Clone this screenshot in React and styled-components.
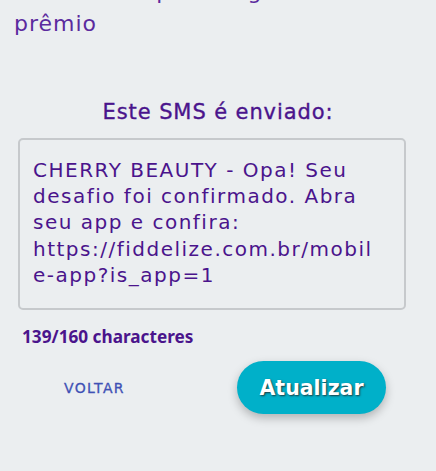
import React from "react";
import styled, { createGlobalStyle } from "styled-components";

const Global = createGlobalStyle`
  html, body { margin: 0; padding: 0; background: #ebeef0; }
  body { width: 436px; height: 471px; overflow: hidden; font-family: "DejaVu Sans", "Noto Sans", sans-serif; }
`;

const Page = styled.div`
  display: flex;
  flex-direction: column;
`;

const Intro = styled.p`
  margin: -24px 0 0 0;
  padding: 0 14px;
  font-family: "DejaVu Sans", sans-serif;
  font-size: 22px;
  letter-spacing: 1px;
  line-height: 32px;
  color: #5b2a9e;
  white-space: pre-line;
`;

const Title = styled.h2`
  margin: 58px 0 0 0;
  text-align: center;
  font-family: "DejaVu Sans", sans-serif;
  font-size: 21px;
  font-weight: 400;
  -webkit-text-stroke: 0.35px #4a148c;
  letter-spacing: 0.9px;
  line-height: 28px;
  color: #4a148c;
`;

const MessageBox = styled.div`
  margin: 12px 30px 0 18px;
  height: 172px;
  box-sizing: border-box;
  border: 2px solid #c6c9cc;
  border-radius: 5px;
  padding: 17px 10px 0 13px;
  font-family: "DejaVu Sans", sans-serif;
  font-size: 20px;
  letter-spacing: 1.5px;
  line-height: 26.2px;
  color: #4a148c;
  white-space: pre-line;
`;

const Counter = styled.div`
  margin: 16px 0 0 22px;
  font-family: "Noto Sans", sans-serif;
  font-size: 17.2px;
  font-weight: 700;
  line-height: 22px;
  color: #4a148c;
`;

const Footer = styled.div`
  display: flex;
  align-items: center;
  justify-content: space-between;
  margin-top: 13px;
  padding: 0 50px 0 64px;
`;

const TextButton = styled.button`
  background: none;
  border: none;
  padding: 0;
  font-family: "DejaVu Sans", sans-serif;
  font-size: 14px;
  font-weight: 400;
  -webkit-text-stroke: 0.3px #3f51b5;
  color: #3f51b5;
  letter-spacing: 1.3px;
`;

const PillButton = styled.button`
  width: 149px;
  height: 53px;
  border: none;
  border-radius: 27px;
  background: #00b0c9;
  color: #ffffff;
  font-family: "DejaVu Sans", sans-serif;
  font-size: 20.5px;
  font-weight: 700;
  text-shadow: 1px 1px 2px #1b3b40;
  box-shadow: 0 4px 10px rgba(0, 0, 0, 0.25);
`;

export default function App() {
  return (
    <>
      <Global />
      <Page>
        <Intro>{"Cliente completa e ganha o seu\nprêmio"}</Intro>
        <Title>Este SMS é enviado:</Title>
        <MessageBox>
          {"CHERRY BEAUTY - Opa! Seu\ndesafio foi confirmado. Abra\nseu app e confira:\nhttps://fiddelize.com.br/mobil\ne-app?is_app=1"}
        </MessageBox>
        <Counter>139/160 characteres</Counter>
        <Footer>
          <TextButton>VOLTAR</TextButton>
          <PillButton>Atualizar</PillButton>
        </Footer>
      </Page>
    </>
  );
}
